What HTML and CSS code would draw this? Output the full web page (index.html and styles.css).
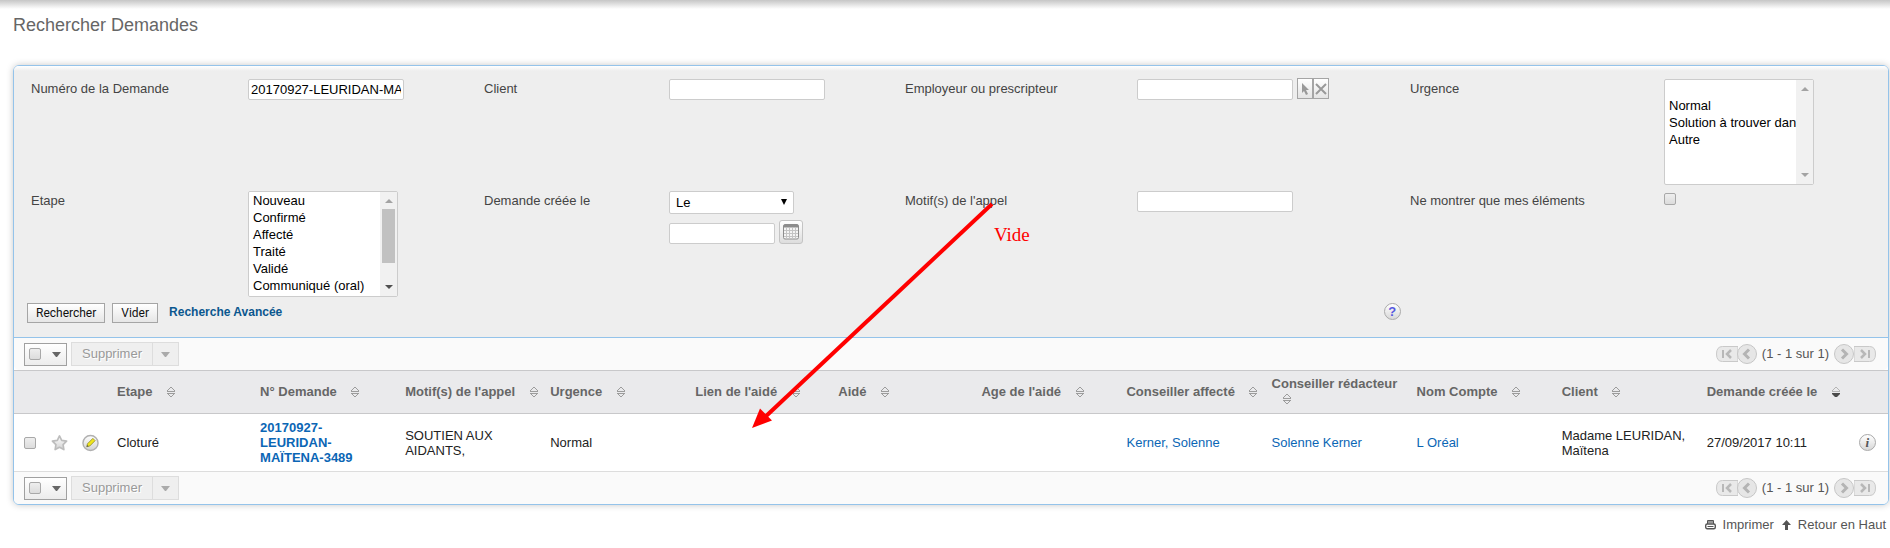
FILE: index.html
```
<!DOCTYPE html>
<html lang="fr">
<head>
<meta charset="utf-8">
<title>Rechercher Demandes</title>
<link rel="stylesheet" href="styles.css">
</head>
<body>
<svg class="defs" width="0" height="0" aria-hidden="true">
  <defs>
    <linearGradient id="metal" x1="0" y1="0" x2="0" y2="1"><stop offset="0" stop-color="#fff"/><stop offset="1" stop-color="#d2d2d2"/></linearGradient>
    <symbol id="sort" viewBox="0 0 8 10"><path d="M0 4h8v1H0zM0 6h8v1H0zM3 0h2v1H3zM2 1h1v1H2zM5 1h1v1H5zM1 2h1v1H1zM6 2h1v1H6zM0 3h1v1H0zM7 3h1v1H7zM1 7h1v1H1zM6 7h1v1H6zM2 8h1v1H2zM5 8h1v1H5zM3 9h2v1H3z" fill="#9c9c9c"/></symbol>
    <symbol id="sort-desc" viewBox="0 0 8 10"><path d="M0 4h8v1H0zM3 0h2v1H3zM2 1h1v1H2zM5 1h1v1H5zM1 2h1v1H1zM6 2h1v1H6zM0 3h1v1H0zM7 3h1v1H7z" fill="#b4b4b4"/><path d="M0 6h8v1L5 10H3L0 7z" fill="#4a4a4a"/></symbol>
    <symbol id="caret" viewBox="0 0 9 5"><path d="M0 0h9L5 5H4z" fill="currentColor"/></symbol>
    <symbol id="page-end" viewBox="0 0 22 20"><path d="M22 2.500H6.500q-6 0-6 7.500t6 7.500H22z" fill="#e9e9e9" stroke="#c9c9c9"/><path d="M7 6v8" stroke="#b8b8b8" stroke-width="2"/><path d="M15 6l-4 4 4 4" fill="none" stroke="#b8b8b8" stroke-width="2.500"/></symbol>
    <symbol id="page-step" viewBox="0 0 20 20"><circle cx="10" cy="10" r="9.500" fill="#e6e6e6" stroke="#c6c6c6"/><path d="M12 5.500L7.500 10l4.500 4.500" fill="none" stroke="#b4b4b4" stroke-width="3"/></symbol>
  </defs>
</svg>
<main class="page">
  <h1 class="title">Rechercher Demandes</h1>
  <section class="panel">
    <form class="search">
      <div class="fields">
        <label class="label" for="numero">Numéro de la Demande</label>
        <div class="field"><input class="text" id="numero" type="text" value="20170927-LEURIDAN-MAÏTENA-3489"></div>
        <label class="label" for="client">Client</label>
        <div class="field"><input class="text" id="client" type="text"></div>
        <label class="label" for="employeur">Employeur ou prescripteur</label>
        <div class="field field-row">
          <input class="text" id="employeur" type="text">
          <span class="pickers">
            <button class="picker" type="button" aria-label="Sélectionner"><svg width="14" height="19" viewBox="0 0 14 19"><path d="M4 4v10l2-2 2 4 2-1-2-4h3z" fill="#999"/></svg></button><button class="picker" type="button" aria-label="Effacer"><svg width="14" height="19" viewBox="0 0 14 19"><path d="M2 5l10 10M12 5L2 15" stroke="#999" stroke-width="2"/></svg></button>
          </span>
        </div>
        <label class="label" for="urgence">Urgence</label>
        <div class="field">
          <div class="list-box">
            <select class="list" id="urgence" multiple size="6"><option></option><option>Normal</option><option>Solution à trouver dans la journée</option><option>Autre</option></select>
            <span class="bar bar-off" aria-hidden="true"><svg width="8" height="4"><path d="M0 4h8L4 0z"/></svg><svg width="8" height="4"><path d="M0 0h8L4 4z"/></svg></span>
          </div>
        </div>

        <label class="label" for="etape">Etape</label>
        <div class="field">
          <div class="list-box">
            <select class="list" id="etape" multiple size="6"><option>Nouveau</option><option>Confirmé</option><option>Affecté</option><option>Traité</option><option>Validé</option><option>Communiqué (oral)</option><option>Communiqué (écrit)</option><option>Cloturé</option></select>
            <span class="bar" aria-hidden="true"><svg class="bar-up" width="8" height="4"><path d="M0 4h8L4 0z"/></svg><span class="thumb"></span><svg width="8" height="4"><path d="M0 0h8L4 4z"/></svg></span>
          </div>
        </div>
        <label class="label" for="creee">Demande créée le</label>
        <div class="field">
          <div class="choice-box">
            <select class="choice" id="creee"><option>Le</option></select>
            <svg class="choice-mark" width="6" height="6" viewBox="0 0 6 6" aria-hidden="true"><path d="M0 0h6L3 6z"/></svg>
          </div>
          <div class="date">
            <input class="text text-date" type="text" aria-label="Date">
            <button class="calendar" type="button" aria-label="Calendrier"><svg width="16" height="16" viewBox="0 0 16 16"><rect x=".5" y=".5" width="15" height="14.500" rx="1.500" fill="#f4f4f4" stroke="#8c8c8c"/><path d="M1 1h14v2.500H1z" fill="#8c8c8c"/><path d="M1 6.500h14M1 9.500h14M1 12.500h14M3.500 4v11M6.500 4v11M9.500 4v11M12.500 4v11" stroke="#c4c4c4"/></svg></button>
          </div>
        </div>
        <label class="label" for="motif">Motif(s) de l'appel</label>
        <div class="field"><input class="text" id="motif" type="text"></div>
        <label class="label" for="mine">Ne montrer que mes éléments</label>
        <div class="field field-check"><input class="check" id="mine" type="checkbox"></div>
      </div>
      <div class="actions">
        <button class="btn" type="button">Rechercher</button>
        <button class="btn" type="button">Vider</button>
        <a class="advanced" href="#">Recherche Avancée</a>
        <button class="icon-btn help" type="button" aria-label="Aide"><span class="orb orb-help">?</span></button>
      </div>
    </form>

    <div class="toolbar">
      <div class="select-all"><input class="check" type="checkbox" aria-label="Tout sélectionner"><svg class="caret" width="9" height="5"><use href="#caret"/></svg></div>
      <div class="bulk"><button class="bulk-main" type="button" disabled>Supprimer</button><button class="bulk-more" type="button" disabled aria-label="Plus"><svg width="9" height="5"><use href="#caret"/></svg></button></div>
      <div class="pager">
        <button class="icon-btn pager-end" type="button" aria-label="Début"><svg width="22" height="20"><use href="#page-end"/></svg></button><button class="icon-btn" type="button" aria-label="Précédent"><svg width="20" height="20"><use href="#page-step"/></svg></button>
        <span class="count">(1 - 1 sur 1)</span>
        <button class="icon-btn flip" type="button" aria-label="Suivant"><svg width="20" height="20"><use href="#page-step"/></svg></button><button class="icon-btn flip" type="button" aria-label="Fin"><svg width="22" height="20"><use href="#page-end"/></svg></button>
      </div>
    </div>

    <table class="results">
      <colgroup><col class="c-check"><col class="c-star"><col class="c-edit"><col class="c-short"><col class="c-data"><col class="c-data"><col class="c-data"><col class="c-short"><col class="c-short"><col class="c-data"><col class="c-data"><col class="c-data"><col class="c-data"><col class="c-data"><col class="c-date"><col class="c-info"></colgroup>
      <thead>
        <tr>
          <td></td><td></td><td></td>
          <th>Etape <svg class="sort" width="8" height="10"><use href="#sort"/></svg></th>
          <th>N° Demande <svg class="sort" width="8" height="10"><use href="#sort"/></svg></th>
          <th>Motif(s) de l'appel <svg class="sort" width="8" height="10"><use href="#sort"/></svg></th>
          <th>Urgence <svg class="sort" width="8" height="10"><use href="#sort"/></svg></th>
          <th>Lien de l'aidé <svg class="sort" width="8" height="10"><use href="#sort"/></svg></th>
          <th>Aidé <svg class="sort" width="8" height="10"><use href="#sort"/></svg></th>
          <th>Age de l'aidé <svg class="sort" width="8" height="10"><use href="#sort"/></svg></th>
          <th>Conseiller affecté <svg class="sort" width="8" height="10"><use href="#sort"/></svg></th>
          <th>Conseiller rédacteur <svg class="sort" width="8" height="10"><use href="#sort"/></svg></th>
          <th>Nom Compte <svg class="sort" width="8" height="10"><use href="#sort"/></svg></th>
          <th>Client <svg class="sort" width="8" height="10"><use href="#sort"/></svg></th>
          <th>Demande créée le <svg class="sort" width="8" height="10"><use href="#sort-desc"/></svg></th>
          <td></td>
        </tr>
      </thead>
      <tbody>
        <tr>
          <td class="cell-check"><input class="check" type="checkbox" aria-label="Sélectionner la demande"></td>
          <td><button class="icon-btn" type="button" aria-label="Favori"><svg width="17" height="18" viewBox="0 0 18 18"><path d="M9 1.500l2.300 4.700 5.200.800-3.700 3.700.800 5.300L9 13.500 4.400 16l.8-5.300L1.500 7l5.200-.8z" fill="url(#metal)" stroke="#bdbdbd" stroke-width="1.800" stroke-linejoin="round"/></svg></button></td>
          <td><button class="icon-btn" type="button" aria-label="Modifier"><svg width="17" height="18" viewBox="0 0 18 18"><circle cx="9" cy="9" r="8" fill="url(#metal)" stroke="#b0b0b0" stroke-width="1.500"/><path d="M5 13l.8-3.200 5.700-5.700 2.400 2.400-5.700 5.700z" fill="#efe51c" stroke="#8a8530" stroke-width=".8"/><path d="M5 13l.5-2 1.500 1.500z" fill="#555"/></svg></button></td>
          <td>Cloturé</td>
          <td class="cell-name"><a class="link link-strong" href="#">20170927-LEURIDAN-MAÏTENA-3489</a></td>
          <td>SOUTIEN AUX AIDANTS,</td>
          <td>Normal</td>
          <td></td><td></td><td></td>
          <td><a class="link" href="#">Kerner, Solenne</a></td>
          <td><a class="link" href="#">Solenne Kerner</a></td>
          <td><a class="link" href="#">L Oréal</a></td>
          <td>Madame LEURIDAN, Maïtena</td>
          <td>27/09/2017 10:11</td>
          <td><button class="icon-btn" type="button" aria-label="Informations"><span class="orb orb-info">i</span></button></td>
        </tr>
      </tbody>
    </table>

    <div class="toolbar">
      <div class="select-all"><input class="check" type="checkbox" aria-label="Tout sélectionner"><svg class="caret" width="9" height="5"><use href="#caret"/></svg></div>
      <div class="bulk"><button class="bulk-main" type="button" disabled>Supprimer</button><button class="bulk-more" type="button" disabled aria-label="Plus"><svg width="9" height="5"><use href="#caret"/></svg></button></div>
      <div class="pager">
        <button class="icon-btn pager-end" type="button" aria-label="Début"><svg width="22" height="20"><use href="#page-end"/></svg></button><button class="icon-btn" type="button" aria-label="Précédent"><svg width="20" height="20"><use href="#page-step"/></svg></button>
        <span class="count">(1 - 1 sur 1)</span>
        <button class="icon-btn flip" type="button" aria-label="Suivant"><svg width="20" height="20"><use href="#page-step"/></svg></button><button class="icon-btn flip" type="button" aria-label="Fin"><svg width="22" height="20"><use href="#page-end"/></svg></button>
      </div>
    </div>
  </section>
  <footer class="foot">
    <a class="foot-link" href="#"><svg width="11" height="11" viewBox="0 0 11 11"><path d="M2.500 5V1.500h6V5" fill="#ddd" stroke="#555"/><path d="M2.500 3h6" stroke="#555"/><rect x=".7" y="5" width="9.600" height="4.800" rx="1.500" fill="#fff" stroke="#555" stroke-width="1.400"/><path d="M2.500 7.500h6" stroke="#555"/></svg>Imprimer</a>
    <a class="foot-link" href="#"><svg width="9" height="10" viewBox="0 0 9 10"><path d="M4.500 0L9 5H6v5H3V5H0z" fill="#555"/></svg>Retour en Haut</a>
  </footer>

  <svg class="arrow" width="242" height="228" viewBox="0 0 242 228" aria-hidden="true"><path d="M240 2L12 216" stroke="#f00" stroke-width="4"/><path d="M0 226L8 206.500 20 218.500z" fill="#f00"/></svg>
  <span class="note">Vide</span>
</main>
</body>
</html>
```
FILE: styles.css
```
* { box-sizing: border-box; }

body {
  margin: 0;
  background: #fff linear-gradient(#c6c6c6, #fff) no-repeat 0 0 / 100% 9px;
  color: #222;
  font: 13px/15px "Liberation Sans", Arial, sans-serif;
}

input, select, button { margin: 0; font: inherit; }
svg { display: block; }
.defs { position: absolute; }

.page { position: relative; padding: 15px 1px 0 13px; }

.title {
  margin: 0 0 30px;
  color: #666;
  font-size: 18px;
  font-weight: 400;
  line-height: 20px;
}

.panel {
  border: 1px solid #94c3ea;
  border-radius: 6px;
  box-shadow: 0 0 7px rgba(0, 0, 0, .22);
}

/* Search form */
.search {
  border-radius: 5px 5px 0 0;
  border-bottom: 1px solid #94c3ea;
  background: #eee linear-gradient(#fff, #eee) no-repeat 0 0 / 100% 5px;
}

.fields {
  display: grid;
  grid-template-columns: 217fr 236fr 185fr 236fr 232fr 273fr 254fr 224fr;
  row-gap: 6px;
  padding: 13px 0 0 17px;
}

.label { padding-top: 2px; color: #444; }
.field { min-width: 0; }
.field-row { display: flex; align-items: flex-start; gap: 4px; }
.field-check { padding-top: 2px; }

.text {
  display: block;
  width: 156px;
  height: 21px;
  padding: 0 2px;
  border: 1px solid #ccc;
  border-radius: 2px;
  background: #fff;
  color: #000;
}
.text-date { width: 106px; }

.pickers { display: flex; margin-top: -1px; }
.picker {
  padding: 0;
  border: 1px solid #a5a5a5;
  background: linear-gradient(#fff, #e4e4e4);
}

.list-box { position: relative; width: 150px; }
.list {
  display: block;
  width: 100%;
  height: 106px;
  padding: 1px 0;
  overflow-x: hidden;
  overflow-y: scroll;
  scrollbar-width: none;
  border: 1px solid #ccc;
  border-radius: 2px;
  background: #fff;
  color: #000;
}
.list option { min-height: 17px; padding: 0 4px; line-height: 17px; }

/* Scroll bar drawn over the list's right edge */
.bar {
  position: absolute;
  top: 1px;
  right: 1px;
  bottom: 1px;
  display: flex;
  flex-direction: column;
  align-items: center;
  justify-content: space-between;
  width: 17px;
  padding: 7px 0;
  background: #f1f1f1;
  fill: #505050;
  pointer-events: none;
}
.bar-off, .bar-up { fill: #a3a3a3; }
.thumb { width: 13px; height: 54px; margin: 6px 0 auto; background: #c1c1c1; }

.choice-box { position: relative; width: 125px; }
.choice {
  display: block;
  width: 100%;
  height: 23px;
  padding: 0 6px;
  appearance: none;
  border: 1px solid #ccc;
  border-radius: 2px;
  background: #fff;
  color: #000;
}
.choice-mark { position: absolute; top: 8px; right: 7px; pointer-events: none; }

.date { display: flex; align-items: flex-end; gap: 4px; margin-top: 6px; }
.calendar {
  padding: 3px;
  border: 1px solid #c4c4c4;
  border-radius: 3px;
  background: linear-gradient(#fff, #ddd);
}

.check {
  display: block;
  width: 12px;
  height: 12px;
  appearance: none;
  border: 1px solid #a8a8a8;
  border-radius: 2px;
  background: linear-gradient(#eee, #dcdcdc);
}

.actions {
  display: flex;
  align-items: flex-start;
  gap: 7px;
  padding: 6px 26% 14px 13px;
}
.btn {
  height: 20px;
  padding: 0 8px;
  border: 1px solid #a5a5a5;
  background: linear-gradient(#fff, #e6e6e6);
  color: #111;
  font-family: Roboto, sans-serif;
  font-size: 12px;
}
.advanced {
  margin-left: 4px;
  color: #0b578f;
  font-size: 12px;
  font-weight: 700;
  line-height: 18px;
  text-decoration: none;
}
.help { margin-left: auto; }

.icon-btn { display: block; padding: 0; border: 0; background: none; }
.orb {
  display: block;
  width: 17px;
  height: 17px;
  border: 1px solid #aaa;
  border-radius: 50%;
  background: linear-gradient(#fff, #d8d8d8);
  text-align: center;
  line-height: 15px;
  font-weight: 700;
}
.orb-help { color: #5559e0; }
.orb-info { color: #555; font-family: "Liberation Serif", serif; font-style: italic; }

/* Toolbars above and below the table */
.toolbar {
  display: flex;
  align-items: center;
  gap: 4px;
  height: 32px;
  padding: 0 12px 0 10px;
  border-radius: 0 0 5px 5px;
  background: #fafafa;
}
.select-all {
  display: flex;
  align-items: center;
  gap: 11px;
  height: 23px;
  padding: 0 5px 0 4px;
  border: 1px solid #a0a0a0;
  background: linear-gradient(#fff, #ececec);
  color: #666;
}
.bulk { display: flex; height: 24px; }
.bulk button {
  border: 1px solid #ddd;
  background: #efefef;
  color: #999;
}
.bulk .bulk-main { padding: 0 10px 2px; text-shadow: 1px 1px 0 #fff; }
.bulk .bulk-more { padding: 0 8px; border-left: 0; color: #aaa; }

.pager { display: flex; align-items: center; margin-left: auto; }
.pager-end { margin-right: -1px; }
.count { margin: 0 5px 2px; color: #555; }
.flip { transform: scaleX(-1); }

/* Results */
.results {
  width: 100%;
  table-layout: fixed;
  border-collapse: collapse;
  background: #fff;
}
.c-check { width: 32px; }
.c-star { width: 31px; }
.c-edit { width: 35px; }
.c-short { width: 143px; }
.c-data { width: 145px; }
.c-date { width: 152px; }
.c-info { width: 34px; }
.results th, .results td {
  padding: 0 5px;
  text-align: left;
  vertical-align: middle;
}
.results thead { background: #eaeaec; }
.results thead tr { height: 43px; border-top: 1px solid #c8c8ca; border-bottom: 1px solid #c8c8ca; }
.results th { padding-bottom: 2px; color: #666; }
.results tbody tr { height: 58px; border-bottom: 1px solid #ddd; }
.results .cell-check { padding-left: 10px; }
.results .cell-name { padding-right: 24px; }
.sort { display: inline-block; margin-left: 11px; vertical-align: -1px; }

.link { color: #0b66b5; text-decoration: none; }
.link-strong { font-weight: 700; }

.foot { display: flex; justify-content: flex-end; gap: 8px; padding: 12px 3px 0 0; }
.foot-link { display: flex; align-items: center; gap: 7px; color: #555; text-decoration: none; }

/* Annotation drawn over the page */
.arrow { position: absolute; top: 202px; left: 752px; pointer-events: none; }
.note {
  position: absolute;
  top: 224px;
  left: 994px;
  color: #f00;
  font: 19px/22px "Liberation Serif", "Times New Roman", serif;
}
```
